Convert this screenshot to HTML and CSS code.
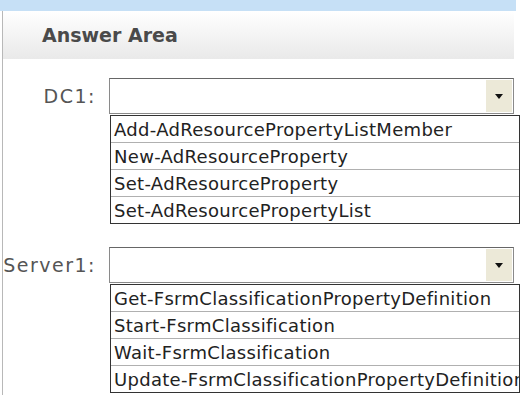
FILE: index.html
```html
<!DOCTYPE html>
<html lang="en">
<head>
  <meta charset="UTF-8">
  <title>Answer Area</title>
  <link rel="stylesheet" href="styles.css">
</head>
<body>
  <div class="top-band"></div>
  <div class="panel">
    <div class="panel-header">Answer Area</div>

    <div class="field">
      <div class="field-label">DC1:</div>
      <div class="field-control">
        <div class="combo">
          <div class="combo-value"></div>
          <div class="combo-button"><span class="arrow"></span></div>
        </div>
        <ul class="options">
          <li>Add-AdResourcePropertyListMember</li>
          <li>New-AdResourceProperty</li>
          <li>Set-AdResourceProperty</li>
          <li>Set-AdResourcePropertyList</li>
        </ul>
      </div>
    </div>

    <div class="field">
      <div class="field-label">Server1:</div>
      <div class="field-control">
        <div class="combo">
          <div class="combo-value"></div>
          <div class="combo-button"><span class="arrow"></span></div>
        </div>
        <ul class="options">
          <li>Get-FsrmClassificationPropertyDefinition</li>
          <li>Start-FsrmClassification</li>
          <li>Wait-FsrmClassification</li>
          <li>Update-FsrmClassificationPropertyDefinition</li>
        </ul>
      </div>
    </div>
  </div>
</body>
</html>
```

FILE: styles.css
```css
body, html {
  margin: 0;
  padding: 0;
  background: #fff;
  overflow: hidden;
  font-family: 'DejaVu Sans', Verdana, sans-serif;
}

.top-band {
  width: 516px;
  height: 11px;
  background-color: #c6e0f6;
}

.panel {
  margin-left: 2px;
  width: 511px;
  height: 384px;
  border-left: 1px solid #b8b8b8;
}

.panel-header {
  height: 48px;
  line-height: 48px;
  padding-left: 39px;
  font-size: 19px;
  font-weight: bold;
  color: #4a4a4a;
  background: linear-gradient(#ffffff, #e9e9e9);
}

.field {
  display: grid;
  grid-template-columns: 94px 405px;
  column-gap: 12px;
  margin-top: 19px;
}

.field + .field {
  margin-top: 23px;
}

.field-label {
  height: 36px;
  line-height: 36px;
  text-align: right;
  font-size: 19px;
  letter-spacing: 1.5px;
  color: #555;
  margin-right: 1px;
}

.combo {
  display: flex;
  height: 34px;
  border: 1px solid #8a8a8a;
  border-top-color: #666;
  background: #fff;
}

.combo-value {
  flex: 1;
}

.combo-button {
  width: 26px;
  margin: 1px;
  background: #ece9d8;
  display: flex;
  align-items: center;
  justify-content: center;
}

.arrow {
  width: 0;
  height: 0;
  border-left: 4px solid transparent;
  border-right: 4px solid transparent;
  border-top: 5px solid #111;
}

.options {
  list-style: none;
  margin: 1px 0 0 1px;
  padding: 0;
  width: 408px;
  border: 1px solid #333;
  overflow: hidden;
  font-size: 18px;
  letter-spacing: 0.3px;
  color: #222;
}

.options li {
  height: 26px;
  line-height: 28px;
  padding-left: 3px;
  white-space: nowrap;
  border-top: 1px solid #b0b0b0;
}

.options li:first-child {
  border-top: none;
}
```
